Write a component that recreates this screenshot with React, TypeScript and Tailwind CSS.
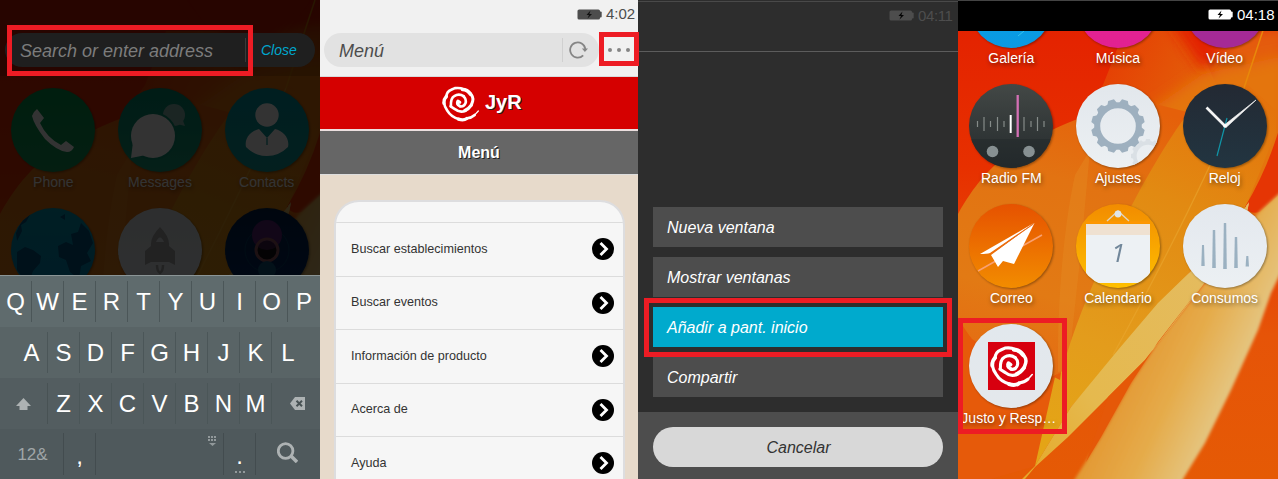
import React from "react";

function Wallpaper({ id }: { id: string }) {
  return (
    <svg className="absolute inset-0 h-full w-full" viewBox="0 0 320 479" preserveAspectRatio="none">
      <defs>
        <linearGradient id={id + "base"} x1="0" y1="0" x2="0" y2="1">
          <stop offset="0" stopColor="#e32000" />
          <stop offset="0.35" stopColor="#e73000" />
          <stop offset="0.7" stopColor="#e65408" />
          <stop offset="1" stopColor="#e55a05" />
        </linearGradient>
        <linearGradient id={id + "warm"} gradientUnits="userSpaceOnUse" x1="150" y1="60" x2="250" y2="110">
          <stop offset="0" stopColor="#e54004" />
          <stop offset="1" stopColor="#e3640a" />
        </linearGradient>
        <linearGradient id={id + "left"} gradientUnits="userSpaceOnUse" x1="130" y1="95" x2="60" y2="380">
          <stop offset="0" stopColor="#e5600a" />
          <stop offset="0.3" stopColor="#e27312" />
          <stop offset="0.7" stopColor="#e27a14" />
          <stop offset="1" stopColor="#e56a12" />
        </linearGradient>
        <linearGradient id={id + "gold"} gradientUnits="userSpaceOnUse" x1="270" y1="70" x2="110" y2="440">
          <stop offset="0" stopColor="#e4700b" />
          <stop offset="0.35" stopColor="#e28a12" />
          <stop offset="0.75" stopColor="#e39c1c" />
          <stop offset="1" stopColor="#e4a416" />
        </linearGradient>
        <linearGradient id={id + "pale"} gradientUnits="userSpaceOnUse" x1="165" y1="385" x2="272" y2="435">
          <stop offset="0" stopColor="#e39a35" />
          <stop offset="0.4" stopColor="#e5ab4a" />
          <stop offset="0.88" stopColor="#e4c784" />
          <stop offset="1" stopColor="#e0a032" />
        </linearGradient>
        <linearGradient id={id + "beam"} x1="1" y1="0" x2="0" y2="1">
          <stop offset="0" stopColor="#e4bc66" />
          <stop offset="0.7" stopColor="#e5b94e" />
          <stop offset="1" stopColor="#e5a828" />
        </linearGradient>
        <filter id={id + "soft"} x="-10%" y="-10%" width="120%" height="120%">
          <feGaussianBlur stdDeviation="1.5" />
        </filter>
        <filter id={id + "haze"} x="-20%" y="-20%" width="140%" height="140%">
          <feGaussianBlur stdDeviation="7" />
        </filter>
      </defs>
      <rect width="320" height="479" fill={`url(#${id}base)`} />
      <path d="M145 85Q155 60 166 31H235L258 85L240 180L90 160Z" fill={`url(#${id}warm)`} />
      <path d="M225 40L262 90L250 110H330V25Z" fill="#e45c08" filter={`url(#${id}haze)`} />
      <path d="M190 -10L246 72L270 40L310 -10Z" fill="#e32200" filter={`url(#${id}haze)`} />
      <path d="M245 74L330 55V220L240 220L180 240L120 160Z" fill="#e4740c" filter={`url(#${id}haze)`} />
      <path d="M0 214C18 182 40 155 80 137C120 116 150 108 190 102L260 120L240 210L104 372L0 420Z" fill={`url(#${id}left)`} />
      <path d="M-5 308Q5 328 14 339Q50 365 100 378L78 466L-5 490Z" fill="#e65a0a" />
      <path d="M100 372C99 300 106 225 117 175L132 150L122 260L110 370Z" fill="#e68c24" opacity="0.4" />
      <path d="M77 466L97 377L104 371C120 310 150 250 175 203C198 160 222 120 245 95L290 85L318 110V132L288 206L232 272L113 407Z" fill={`url(#${id}gold)`} />
      <path d="M96 377L103 372L102 380Z" fill="#e65a0a" />
      <path d="M322 126Q310 168 287 207Q292 215 302 212L322 194Z" fill="#e53504" />
      <path d="M288 206L291 202L289 212Z" fill="#e6b96a" />
      <path d="M315 0L286 88" stroke="#e8890b" strokeWidth="1.5" fill="none" />
      <path d="M286 88Q240 200 155 355" stroke="#e9a62e" strokeWidth="1.3" opacity="0.6" fill="none" />
      <path d="M117 479L143 437L173 383L200 342L245 285L290 225L302 211L325 190V268L313 293L300 330L273 390L247 443L225 479V490H110Z" fill={`url(#${id}pale)`} filter={`url(#${id}soft)`} />
      <path d="M64 479L77 466L113 407L160 350L200 303L232 272L291 203L284 235L245 285L213 327L187 360L150 397L110 437L77 467L67 479Z" fill={`url(#${id}beam)`} />
      <path d="M245 284L213 326L187 360L150 397L128 462L143 437L173 383L200 342Z" fill="#e55808" />
    </svg>
  );
}

function Rose({ className }: { className: string }) {
  return (
    <svg className={className} viewBox="18 12 112 108" fill="none" stroke="#fff" strokeLinecap="round" strokeLinejoin="round">
      <path strokeWidth="4" d="M128 87L117 99" />
      <path strokeWidth="8" d="M117 99Q107 108 94 109" />
      <path strokeWidth="10" d="M93 110Q84 117 68 112" />
      <path strokeWidth="8" d="M70 112Q45 105 34 86Q26 76 24 62" />
      <path strokeWidth="10" d="M24 64Q23 52 31 43" />
      <path strokeWidth="8" d="M31 45Q32 28 46 23L57 18Q74 16 82 21" />
      <path strokeWidth="11" d="M80 22Q95 22 104 36" />
      <path strokeWidth="9" d="M103 34Q114 44 111 57L107 69" />
      <path strokeWidth="10" d="M106 70Q98 82 87 86" />
      <path strokeWidth="8" d="M90 86Q72 94 58 82L44 73" />
      <path strokeWidth="8" d="M45 72Q44 48 55 42Q70 33 84 43" />
      <path strokeWidth="8" d="M83 42Q93 52 89 64Q84 76 72 73" />
      <path strokeWidth="9" d="M72 72Q60 66 66 57L72 61" />
    </svg>
  );
}

function Battery({ className, bolt }: { className: string; bolt: string }) {
  return (
    <svg className={"h-[11px] w-[25px] " + className} viewBox="0 0 25 11" fill="currentColor">
      <rect x="0.5" y="0.5" width="22.5" height="10" rx="1.6" />
      <rect x="22" y="2.5" width="2.7" height="6" rx="1" />
      <path d="M13.5 1.6L9.5 6H12L10.5 9.4L15 5H12.4Z" fill={bolt} />
    </svg>
  );
}

function Dial({ art }: { art: string }) {
  return (
    <svg className="h-[86px] w-[86px] shrink-0 drop-shadow-[1px_1px_1px_rgba(0,0,0,0.35)]" viewBox="-43 -43 86 86">
      <defs>
        <clipPath id={"clip-" + art}><circle r="42" /></clipPath>
        <linearGradient id={"fill-" + art} x1="0" y1="0" x2="0" y2="1">
          <stop offset="0" stopColor={fills[art][0]} />
          <stop offset="1" stopColor={fills[art][1]} />
        </linearGradient>
      </defs>
      <circle r="42" fill={`url(#fill-${art})`} />
      <g clipPath={`url(#clip-${art})`}>{drawings[art]}</g>
    </svg>
  );
}

const fills: Record<string, [string, string]> = {
  phone: ["#00964a", "#159758"],
  messages: ["#008a70", "#1a9c78"],
  contacts: ["#0095a0", "#119d98"],
  browser: ["#0099b5", "#0088b8"],
  rocket: ["#dfe5e9", "#e8edf0"],
  camera: ["#002048", "#002a68"],
  gallery: ["#00a4e8", "#0b99e2"],
  music: ["#e52590", "#e12192"],
  video: ["#a52a96", "#a52a96"],
  radio: ["#434846", "#242a2c"],
  settings: ["#e2e7ec", "#ecf0f3"],
  clock: ["#232933", "#223541"],
  mail: ["#e65200", "#f28c00"],
  calendar: ["#f28c00", "#ffc000"],
  usage: ["#e3e8ee", "#ecf0f3"],
  jyr: ["#e2e8ed", "#e4e8ec"],
};

const teeth = [0, 30, 60, 90, 120, 150, 180, 210, 240, 270, 300, 330];

const drawings: Record<string, React.ReactNode> = {
  phone: <path d="M-16 -21L-9 -12L-13 -7Q-6 8 8 15L13 11L21 17Q19 22 14 22Q4 21 -8 9Q-19 -5 -21 -14Q-20 -18 -16 -21Z" fill="#fff" />,
  messages: (
    <>
      <circle cx="14" cy="-15" r="11" fill="#89b7b0" />
      <path d="M22 -12L25 -4L17 -6Z" fill="#89b7b0" />
      <circle cx="-7" cy="6" r="24" fill="#0c9274" />
      <circle cx="-7" cy="6" r="22" fill="#fff" />
      <path d="M-27 12L-29 28L-14 25Z" fill="#fff" />
    </>
  ),
  contacts: (
    <>
      <circle cy="-15" r="11.7" fill="#fff" />
      <path d="M-8 -1L0 8L8 -1C16 1 23 8 21 17Q12 26 0 26Q-12 26 -21 17C-23 8 -16 1 -8 -1Z" fill="#fff" />
      <path d="M0 8V15" stroke="#119d98" strokeWidth="1.3" />
    </>
  ),
  browser: (
    <g fill="#005480">
      <path d="M-37 -17L-31 -30L-22 -37L-27 -28L-32 -25L-31 -19L-36 -9Z" />
      <path d="M-36 2L-28 -3L-20 0L-12 6L-13 13L-20 21L-25 35L-36 20Z" />
      <path d="M5 -4L13 -8L20 -5L18 -16L25 -18L28 -27L36 -19L40 -7L34 3L38 11L28 16L26 29L17 22L13 10L6 7Z" />
      <path d="M7 -33L12 -36L12 -30Z" />
    </g>
  ),
  rocket: (
    <>
      <path d="M0 -23Q10 -13 9 -4L15 1V15L9 12H-9L-15 15V1L-9 -4Q-10 -13 0 -23Z" fill="#a9abac" />
      <path d="M-4 -8Q0 -17 4 -8Z" fill="#e2e7ea" />
      <path d="M-3 15Q-3 21 0 23Q3 21 3 15" stroke="#a9abac" strokeWidth="2.5" fill="none" />
    </>
  ),
  camera: (
    <>
      <circle r="22" fill="none" stroke="#044068" strokeWidth="1" />
      <circle cy="-15" r="15" fill="#5c2378" />
      <circle r="11" fill="#151015" stroke="#905860" strokeWidth="3" />
      <path d="M-9.500 -3A10 10 0 0 1 9.500 -3Q0 3 -9.500 -3Z" fill="#7d2d91" opacity=".4" />
      <circle cy="20" r="9" fill="#11557c" />
    </>
  ),
  gallery: <path d="M7 30L13 25" stroke="#33c3ee" strokeWidth="1" />,
  music: null,
  video: null,
  radio: (
    <>
      <rect x="-43" y="13" width="86" height="30" fill="#22282a" opacity=".5" />
      {[[-33.5, 3], [-27, 7], [-20.5, 3], [-13.5, 7], [-7, 3], [13, 7], [20, 3], [26.5, 7], [33, 3]].map(([x, h]) => (
        <path key={x} d={`M${x} ${-2 - h}V${-2 + h}`} stroke="#858b89" strokeWidth="1.2" />
      ))}
      <path d="M-0.3 -11V7" stroke="#fff" strokeWidth="2" />
      <path d="M6.7 -31V11" stroke="#d370b4" strokeWidth="2.3" />
      <circle cx="-18.5" cy="25.5" r="5.8" fill="#879092" />
      <circle cx="18" cy="25.5" r="5.8" fill="#879092" />
    </>
  ),
  settings: (
    <>
      <g transform="translate(30 30) scale(.63)">
        <circle r="21" fill="none" stroke="#dae0e5" strokeWidth="6" />
        {teeth.map((a) => (
          <path key={a} d="M-4.500 -23L-3 -27H3L4.500 -23Z" fill="#dae0e5" transform={`rotate(${a})`} />
        ))}
      </g>
      <circle r="20.800" fill="none" stroke="#9eb0bf" strokeWidth="6" />
      {teeth.map((a) => (
        <path key={a} d="M-5 -22.500L-3 -26.800H3L5 -22.500Z" fill="#9eb0bf" transform={`rotate(${a + 15})`} />
      ))}
    </>
  ),
  clock: (
    <>
      <path d="M2 -8L-8 30" stroke="#1096a8" strokeWidth="1.2" />
      <path d="M-18.500 -18.500L0 0" stroke="#f4f4f4" strokeWidth="2.6" />
      <path d="M-1.300 -0.500L31 -26L1 1.500Z" fill="#f4f4f4" stroke="#f4f4f4" strokeWidth=".7" />
      <circle r="1.8" fill="#fff" />
    </>
  ),
  mail: (
    <>
      <path d="M-33 25L31 -11" stroke="#f9a071" strokeWidth="1.6" />
      <path d="M23 -23L-31 8Q-24 8 -21 7Z" fill="#fff" />
      <path d="M23.500 -23L-20 9L-13 21L-8 15L3 18L12 0Z" fill="#fff" />
      <path d="M22.500 -22L-20.500 8" stroke="#e96a1b" strokeWidth=".9" />
    </>
  ),
  calendar: (
    <>
      <rect x="-32" y="-22" width="64" height="59" fill="#edf1f4" />
      <rect x="-32" y="-22" width="64" height="11" fill="#efe1d1" />
      <path d="M-32 -23.5H32" stroke="#ff9500" strokeWidth="2" />
      <path d="M-11 -25L0 -35L11 -25" fill="none" stroke="#e2d3bb" strokeWidth="1.4" />
      <circle cy="-32" r="3.4" fill="#dfe5e8" />
      <text x="-7" y="16" className="text-[26px] italic" fill="#71879a" fontFamily="Open Sans, sans-serif" fontWeight="400">1</text>
    </>
  ),
  usage: (
    <g fill="#9bb1c1">
      <path d="M-23 -1H-21L-20.300 20H-23.700Z" />
      <path d="M-12.200 -16H-9.800L-9.200 22H-12.800Z" />
      <path d="M-1.200 -23H1.200L1.800 23H-1.800Z" />
      <path d="M9.800 -9H12.200L12.800 22H9.200Z" />
      <path d="M21.300 10H23.300L24 20.500H20.600Z" />
    </g>
  ),
  jyr: <rect x="-23" y="-24" width="47" height="48" fill="#d7000f" />,
};

function AppIcon({ art, label, clipped }: { art: string; label: string; clipped?: boolean }) {
  return (
    <div className="flex h-[120px] flex-col items-center">
      <div className="relative -mt-px">
        <Dial art={art} />
        {art === "jyr" && <Rose className="absolute top-[22px] left-[22px] h-[43px] w-[43px]" />}
      </div>
      <span className={"-mt-px text-[14px] leading-5 whitespace-nowrap [text-shadow:1px_2px_4px_rgba(0,0,0,0.5)] " + (clipped ? "-ml-[5px]" : "")}>{label}</span>
    </div>
  );
}

function Key({ label, last }: { label: string; last?: boolean }) {
  return <div className={"my-[5px] flex w-8 items-center justify-center text-[24px] text-white " + (last ? "" : "border-r border-[#4b5658]")}>{label}</div>;
}

function Keyboard() {
  return (
    <div className="relative mt-auto flex h-[204px] w-full shrink-0 flex-col border-t border-[#8b9596]">
      <div className="flex h-[51px] bg-[#5f6b6d]">{"QWERTYUIOP".split("").map((k) => <Key key={k} label={k} last={k === "P"} />)}</div>
      <div className="flex h-[51px] bg-[#596466] pl-4">{"ASDFGHJKL".split("").map((k) => <Key key={k} label={k} last={k === "L"} />)}</div>
      <div className="flex h-[51px] bg-[#535d60]">
        <div className="my-[5px] flex w-12 items-center justify-center border-r border-[#485254]">
          <svg className="h-3 w-[15px]" viewBox="0 0 15 12" fill="#adb2b3"><path d="M7.500 0L15 8H11.500V12H3.500V8H0Z" /></svg>
        </div>
        {"ZXCVBNM".split("").map((k) => <Key key={k} label={k} />)}
        <div className="flex w-12 items-center justify-center pl-1">
          <svg className="h-[13px] w-4" viewBox="0 0 16 13"><path d="M5 0H15V13H5L0 6.500Z" fill="#adb2b3" /><path d="M6.500 3.800L12 9.200M12 3.800L6.500 9.200" stroke="#485254" strokeWidth="2" /></svg>
        </div>
      </div>
      <div className="flex h-[50px] bg-[#4f595c]">
        <div className="my-1 flex w-16 items-center justify-center border-r border-[#434c4f] pt-0.5 pl-0.5 text-[17px] text-[#a0a6a8]">12&amp;</div>
        <div className="my-1 flex w-8 items-center justify-center border-r border-[#434c4f] pt-1 text-[24px] text-white">,</div>
        <div className="my-1 flex w-32 justify-end border-r border-[#434c4f] pt-[3px] pr-[7px]">
          <svg className="h-[11px] w-2" viewBox="0 0 8 11" fill="#92999b">
            <path d="M0 0h2v2H0zM3 0h2v2H3zM6 0h2v2H6zM0 3h2v2H0zM3 3h2v2H3zM6 3h2v2H6zM1 7h7L4.500 10Z" />
          </svg>
        </div>
        <div className="my-1 flex w-8 flex-col items-center border-r border-[#434c4f] text-white">
          <span className="mt-[7px] h-[30px] text-[24px] leading-[32px]">.</span>
          <svg className="mt-px h-[2px] w-[10px] shrink-0" viewBox="0 0 10 2" fill="#92999b"><path d="M0 0h2v2H0zM4 0h2v2H4zM8 0h2v2H8z" /></svg>
        </div>
        <div className="flex w-16 items-center justify-center">
          <svg className="-mt-1 -ml-0.5 h-[21px] w-[21px]" viewBox="0 0 21 21" fill="none" stroke="#adb2b3"><circle cx="8.600" cy="9" r="7.300" strokeWidth="2.800" /><path d="M14 14L20 20" strokeWidth="3.500" /></svg>
        </div>
      </div>
    </div>
  );
}

function SearchPhone() {
  return (
    <section className="relative flex h-full w-[320px] shrink-0 flex-col overflow-hidden">
      <Wallpaper id="a" />
      <div className="absolute inset-x-0 top-[88px] grid grid-cols-3 text-white">
        <AppIcon art="phone" label="Phone" />
        <AppIcon art="messages" label="Messages" />
        <AppIcon art="contacts" label="Contacts" />
        <AppIcon art="browser" label="" />
        <AppIcon art="rocket" label="" />
        <AppIcon art="camera" label="" />
      </div>
      <div className="absolute inset-0 bg-black/80" />
      <header className="relative h-[76px] shrink-0 bg-black/15 px-[5px] pt-[33px]">
        <div className="flex h-[34px] items-center rounded-full bg-[#1f1f1f] pl-4 italic">
          <span className="-ml-px w-[225px] pt-[2px] text-[18px] text-[#7c7c7c]">Search or enter address</span>
          <span className="h-6 w-px bg-[#3a3a3a]" />
          <span className="ml-[15px] text-[14px] text-[#00a7ce]">Close</span>
        </div>
      </header>
      <Keyboard />
      <div className="absolute top-[25px] left-[7px] h-[51px] w-[246px] border-[5px] border-[#ed1c24]" />
    </section>
  );
}

const links = ["Buscar establecimientos", "Buscar eventos", "Información de producto", "Acerca de", "Ayuda"];

function BrowserPhone() {
  return (
    <section className="relative z-10 flex h-full w-[318px] shrink-0 flex-col bg-[#e7dacb]">
      <header className="h-[77px] shrink-0 border-b border-[#d8dadb] bg-[#f1f1f1]">
        <div className="flex h-[33px] items-center pl-[257px]">
          <Battery className="-mt-[5px] text-[#4d4d4d]" bolt="#111" />
          <span className="-mt-[5px] ml-1 text-[15px] leading-5 text-[#4d4d4d]">4:02</span>
        </div>
        <div className="ml-1 flex items-center">
          <div className="flex h-[34px] w-[275px] items-center rounded-full bg-[#e2e2e2] pl-[15px]">
            <span className="w-[223px] pt-[2px] text-[18px] text-[#4d4d4d] italic">Menú</span>
            <span className="h-6 w-px bg-[#d0d0d0]" />
            <svg className="-mt-px ml-[6px] h-[18px] w-[19px]" viewBox="0 0 19 18" fill="none" stroke="#858585">
              <path d="M14.200 14.300A7.600 7.600 0 1 1 16.300 8" strokeWidth="1.800" />
              <path d="M12.900 7.500H19L15.900 11Z" fill="#858585" stroke="none" />
            </svg>
          </div>
          <div className="ml-[9px] flex gap-[5px]">
            {[0, 1, 2].map((n) => <span key={n} className="h-1 w-1 rounded-full bg-[#858585]" />)}
          </div>
        </div>
      </header>
      <div className="flex h-[54px] shrink-0 items-start border-b-2 border-[#ecdfdf] bg-[#d50000] pl-[122px]">
        <Rose className="mt-[9px] h-[36px] w-[37px]" />
        <h1 className="mt-[11px] ml-[6px] text-[20px] leading-7 font-bold text-white [text-shadow:1px_1px_0_#222]">JyR</h1>
      </div>
      <h2 className="flex h-[44px] shrink-0 items-center justify-center border-b border-[#dddddd] bg-[#666666] text-[16px] font-bold text-white [text-shadow:1px_1px_0_#222]">Menú</h2>
      <div className="flex min-h-0 flex-1 flex-col overflow-hidden pt-[25px] pl-[14px]">
        <ul className="w-[291px] shrink-0 overflow-hidden rounded-t-[25px] border-2 border-[#dddddf] bg-[#f6f6f6] pt-5">
          {links.map((t) => (
            <li key={t} className="flex h-[53.500px] items-center justify-between border-t border-[#dcdcdc] pr-[9px] pl-[15px] text-[12.600px] text-[#333]">
              {t}
              <svg className="h-[22px] w-[22px]" viewBox="0 0 22 22"><circle cx="11" cy="11" r="11" /><path d="M8.500 5L14.500 11L8.500 17" fill="none" stroke="#fff" strokeWidth="2.800" /></svg>
            </li>
          ))}
        </ul>
      </div>
      <div className="absolute top-[32px] left-[279px] h-[34px] w-[40px] border-[5px] border-[#ed1c24]" />
    </section>
  );
}

function MenuPhone() {
  const row = "flex h-10 items-center pt-[2px] pl-[14px] text-[16px] text-white italic ";
  return (
    <section className="relative flex h-full w-[320px] shrink-0 flex-col bg-[#2d2d2d]">
      <div className="mt-px flex h-[51px] shrink-0 border-y border-t-[#494949] border-b-[#5c5c5c] pt-[4px] pl-[251px]">
        <Battery className="mt-1 text-[#4d4d4d]" bolt="#050505" />
        <span className="ml-1 text-[15px] leading-5 tracking-[-0.4px] text-[#4d4d4d]">04:11</span>
      </div>
      <div className="mx-[15px] mt-[155px] flex flex-col gap-[10px]">
        <div className={row + "bg-[#4d4d4d]"}>Nueva ventana</div>
        <div className={row + "bg-[#4d4d4d]"}>Mostrar ventanas</div>
        <div className={row + "bg-[#00aacd]"}>Añadir a pant. inicio</div>
        <div className={row + "bg-[#4d4d4d]"}>Compartir</div>
      </div>
      <div className="mt-auto h-[67px] bg-[#4d4d4d] px-[15px] pt-[15px]">
        <div className="flex h-10 items-center justify-center rounded-full bg-[#d8d8d8] pt-[2px] pl-px text-[16px] text-[#333] italic">Cancelar</div>
      </div>
      <div className="absolute top-[298px] left-[6px] h-[59px] w-[308px] border-[5px] border-[#ed1c24]" />
    </section>
  );
}

function HomePhone() {
  return (
    <section className="relative flex h-full w-[320px] shrink-0 flex-col overflow-hidden">
      <Wallpaper id="b" />
      <header className="relative z-10 flex h-[31px] shrink-0 border-t border-[#444] bg-black pt-1 pl-[250px] text-white">
        <Battery className="mt-1" bolt="#000" />
        <span className="ml-1 text-[15px] leading-5">04:18</span>
      </header>
      <div className="relative -mt-[67px] grid grid-cols-3 text-white">
        <AppIcon art="gallery" label="Galería" />
        <AppIcon art="music" label="Música" />
        <AppIcon art="video" label="Vídeo" />
        <AppIcon art="radio" label="Radio FM" />
        <AppIcon art="settings" label="Ajustes" />
        <AppIcon art="clock" label="Reloj" />
        <AppIcon art="mail" label="Correo" />
        <AppIcon art="calendar" label="Calendario" />
        <AppIcon art="usage" label="Consumos" />
        <AppIcon art="jyr" label="Justo y Resp…" clipped />
      </div>
      <div className="absolute top-[318px] left-0 h-[116px] w-[109px] border-[5px] border-[#ed1c24]" />
    </section>
  );
}

export default function App() {
  return (
    <main className="flex h-[479px] w-[1278px] overflow-hidden font-['Liberation_Sans',Arial,sans-serif]">
      <SearchPhone />
      <BrowserPhone />
      <MenuPhone />
      <HomePhone />
    </main>
  );
}
